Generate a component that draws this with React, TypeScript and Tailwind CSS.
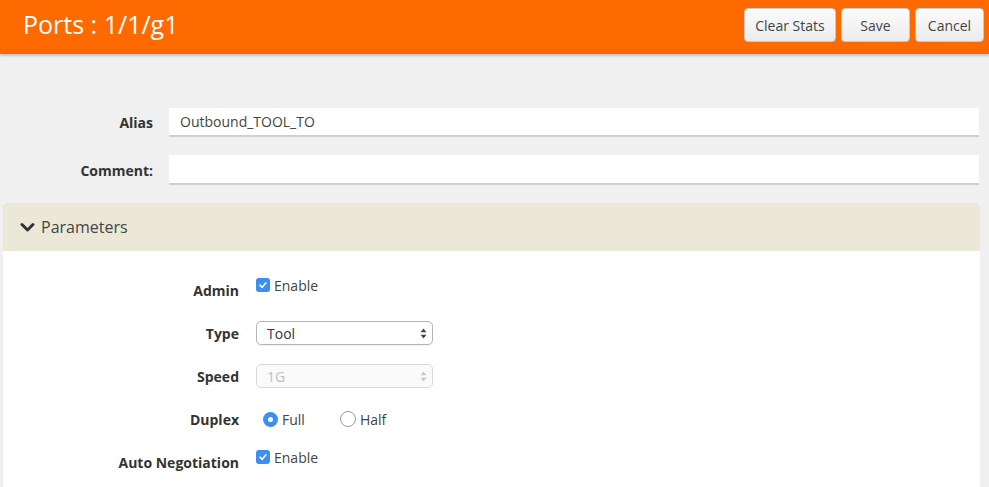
import React from "react";

function Check() {
  return (
    <span className="inline-flex h-[14px] w-[14px] items-center justify-center rounded-[3px] bg-[#3b8ef3]">
      <svg width="10" height="10" viewBox="0 0 10 10">
        <path d="M2 5.2 L4.2 7.3 L8 2.8" stroke="white" strokeWidth="1.6" fill="none" strokeLinecap="round" strokeLinejoin="round" />
      </svg>
    </span>
  );
}

function Arrows({ disabled }: { disabled?: boolean }) {
  const c = disabled ? "#c8c8c8" : "#444";
  return (
    <svg width="7" height="11" viewBox="0 0 7 11">
      <path d="M3.5 0.5 L6.5 4.3 L0.5 4.3 Z" fill={c} />
      <path d="M3.5 10.5 L6.5 6.7 L0.5 6.7 Z" fill={c} />
    </svg>
  );
}

function Row({ label, children, className }: { label: string; children: React.ReactNode; className?: string }) {
  return (
    <div className={"flex items-center " + (className || "")}>
      <div className="w-[236px] text-right text-[14px] font-bold text-[#333]">{label}</div>
      <div className="ml-[17px] flex items-center">{children}</div>
    </div>
  );
}

export default function App() {
  return (
    <div className="h-[487px] w-[989px] overflow-hidden bg-[#f0f0f0]" style={{ fontFamily: '"Open Sans", sans-serif' }}>
      <div className="flex h-[54px] items-center justify-between bg-[#ff6a00] pl-[23px] pr-[5px] shadow-[0_2px_2px_rgba(0,0,0,0.18)]">
        <div className="text-[25px] text-white leading-none pb-[6px]">Ports : 1/1/g1</div>
        <div className="flex gap-[5px] pb-[4px]">
          <button className="h-[34px] w-[92px] rounded-[4px] border border-[#c8c8c8] bg-gradient-to-b from-[#fbfbfb] to-[#ececec] text-[14px] text-[#444]">Clear Stats</button>
          <button className="h-[34px] w-[69px] rounded-[4px] border border-[#c8c8c8] bg-gradient-to-b from-[#fbfbfb] to-[#ececec] text-[14px] text-[#444]">Save</button>
          <button className="h-[34px] w-[69px] rounded-[4px] border border-[#c8c8c8] bg-gradient-to-b from-[#fbfbfb] to-[#ececec] text-[14px] text-[#444]">Cancel</button>
        </div>
      </div>

      <div className="pt-[54px] pr-[10px]">
        <div className="flex items-center">
          <div className="w-[153px] text-right text-[14px] font-bold text-[#333]">Alias</div>
          <div className="ml-[16px] flex h-[29px] flex-1 items-center border-b-2 border-[#cfcfcf] bg-white pl-[11px] text-[14px] text-[#444]">Outbound_TOOL_TO</div>
        </div>
        <div className="mt-[18px] flex items-center">
          <div className="w-[153px] text-right text-[14px] font-bold text-[#333]">Comment:</div>
          <div className="ml-[16px] h-[30px] flex-1 border-b-2 border-[#cfcfcf] bg-white"></div>
        </div>
      </div>

      <div className="ml-[3px] mr-[9px] mt-[18px] bg-white">
        <div className="flex h-[48px] items-center rounded-t-[3px] bg-[#ece8d8] pl-[17px] text-[16px] text-[#444]">
          <svg width="15" height="11" viewBox="0 0 15 11" className="mr-[6px]">
            <path d="M2 2.5 L7.5 8 L13 2.5" stroke="#333" strokeWidth="3" fill="none" strokeLinecap="round" strokeLinejoin="round" />
          </svg>
          Parameters
        </div>
        <div className="pt-[24px] pb-[20px]">
          <Row label="Admin" className="h-[30px]">
            <div className="mt-[-10px] flex items-center">
              <Check />
              <span className="ml-[4px] text-[14px] text-[#444]">Enable</span>
            </div>
          </Row>
          <Row label="Type" className="mt-[13px] h-[30px]">
            <div className="flex h-[24px] w-[177px] items-center justify-between rounded-[5px] border border-[#b5b5b5] bg-white pl-[10px] pr-[5px] text-[14px] text-[#333] shadow-[0_1px_1px_rgba(0,0,0,0.06)]">
              <span>Tool</span>
              <Arrows />
            </div>
          </Row>
          <Row label="Speed" className="mt-[13px] h-[30px]">
            <div className="flex h-[24px] w-[177px] items-center justify-between rounded-[5px] border border-[#d8d8d8] bg-[#fafafa] pl-[10px] pr-[5px] text-[14px] text-[#c0c0c0]">
              <span>1G</span>
              <Arrows disabled />
            </div>
          </Row>
          <Row label="Duplex" className="mt-[13px] h-[30px]">
            <div className="ml-[7px] flex items-center">
              <span className="inline-flex h-[15px] w-[15px] items-center justify-center rounded-full bg-[#3b8ef3]">
                <span className="h-[5px] w-[5px] rounded-full bg-white"></span>
              </span>
              <span className="ml-[4px] text-[14px] text-[#444]">Full</span>
              <span className="ml-[35px] inline-block h-[16px] w-[16px] rounded-full border border-[#9a9a9a] bg-white"></span>
              <span className="ml-[4px] text-[14px] text-[#444]">Half</span>
            </div>
          </Row>
          <Row label="Auto Negotiation" className="mt-[13px] h-[30px]">
            <div className="mt-[-10px] flex items-center">
              <Check />
              <span className="ml-[4px] text-[14px] text-[#444]">Enable</span>
            </div>
          </Row>
        </div>
      </div>
    </div>
  );
}
